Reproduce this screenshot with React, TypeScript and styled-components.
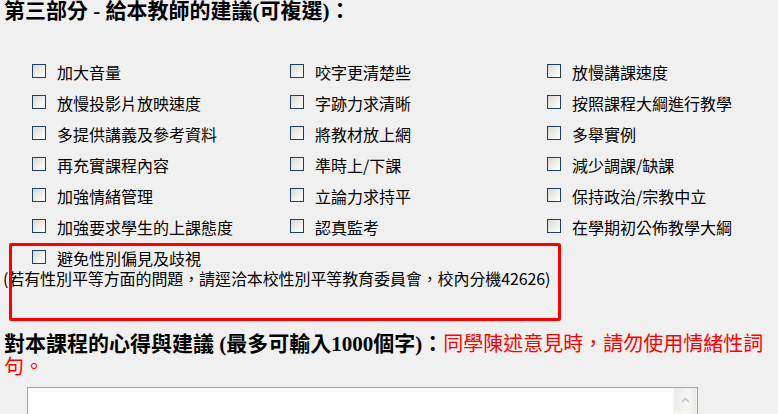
import React from "react";
import styled, { createGlobalStyle } from "styled-components";

const Global = createGlobalStyle`
  html, body { margin: 0; padding: 0; background: #f0f0f0; }
  body { font-family: "Liberation Serif", "Noto Sans CJK TC", serif; color: #000; }
`;

const Page = styled.div`
  position: relative;
  padding: 0 0 0 4px;
  width: 774px;
  overflow: hidden;
`;

const Title = styled.h2`
  margin: 0;
  font-size: 21px;
  font-weight: bold;
  line-height: 22px;
  height: 22px;
`;

const Grid = styled.div`
  display: grid;
  grid-template-columns: 258px 257px 1fr;
  grid-auto-rows: 31px;
  padding: 39px 0 0 28px;
`;

const Option = styled.label`
  display: flex;
  align-items: flex-start;
  gap: 11px;
  font-size: 16px;
  line-height: 18px;
  font-family: "Noto Sans CJK TC", sans-serif;
`;

const OptionText = styled.span`
  margin-top: 2px;
`;

const Box = styled.input.attrs({ type: "checkbox" })`
  appearance: none;
  margin: 3px 0 0 0;
  width: 14px;
  height: 14px;
  flex: none;
  box-sizing: border-box;
  border: 1px solid #1e3f66;
  background: linear-gradient(135deg, #d8d8d0 0%, #eeeee8 50%, #ffffff 100%);
`;

const Note = styled.div`
  font-size: 16px;
  line-height: 18px;
  margin: -9px 0 0 -1px;
  font-family: "Noto Sans CJK TC", sans-serif;
  letter-spacing: -0.1px;
`;

const Highlight = styled.div`
  position: absolute;
  left: 9px;
  top: 243px;
  width: 552px;
  height: 78px;
  box-sizing: border-box;
  border: 3px solid #ff0000;
  border-radius: 2px;
  pointer-events: none;
`;

const Heading = styled.div`
  margin-top: 46px;
  font-size: 21px;
  line-height: 23px;
  font-weight: bold;
`;

const Warn = styled.span`
  color: #ff0000;
  font-weight: normal;
  font-size: 20px;
`;

const AreaFrame = styled.div`
  display: flex;
  margin: 8px 0 0 23px;
  width: 671px;
  height: 120px;
  box-sizing: border-box;
  border: 1px solid #9e9ed0;
  background: #fff;
`;

const Area = styled.textarea`
  flex: 1;
  border: none;
  outline: none;
  resize: none;
  background: transparent;
  font-family: "Noto Sans CJK TC", sans-serif;
`;

const ScrollBar = styled.div`
  width: 23px;
  display: flex;
  flex-direction: column;
  background: linear-gradient(90deg, #f1f1e8 0%, #fafaf4 50%, #ededE2 100%);
  border-left: 1px solid #f4f4f0;
`;

const ScrollButton = styled.div`
  height: 21px;
  display: flex;
  align-items: center;
  justify-content: center;
  background: linear-gradient(90deg, #ebebeb, #f6f6f6 60%, #e9e9e4);
  border: 1px solid #f0f0ee;
`;

const items = [
  "加大音量", "咬字更清楚些", "放慢講課速度",
  "放慢投影片放映速度", "字跡力求清晰", "按照課程大綱進行教學",
  "多提供講義及參考資料", "將教材放上網", "多舉實例",
  "再充實課程內容", "準時上/下課", "減少調課/缺課",
  "加強情緒管理", "立論力求持平", "保持政治/宗教中立",
  "加強要求學生的上課態度", "認真監考", "在學期初公佈教學大綱",
  "避免性別偏見及歧視",
];

export default function App() {
  return (
    <Page>
      <Global />
      <Title>第三部分 - 給本教師的建議(可複選)：</Title>
      <Grid>
        {items.map((t) => (
          <Option key={t}>
            <Box />
            <OptionText>{t}</OptionText>
          </Option>
        ))}
      </Grid>
      <Note>(若有性別平等方面的問題，請逕洽本校性別平等教育委員會，校內分機42626)</Note>
      <Highlight />
      <Heading>
        對本課程的心得與建議 (最多可輸入1000個字)：<Warn>同學陳述意見時，請勿使用情緒性詞句。</Warn>
      </Heading>
      <AreaFrame>
        <Area />
        <ScrollBar>
          <ScrollButton>
            <svg width="9" height="6" viewBox="0 0 9 6">
              <path d="M1 5 L4.5 1.5 L8 5" fill="none" stroke="#c4c4c4" strokeWidth="1.5" />
            </svg>
          </ScrollButton>
        </ScrollBar>
      </AreaFrame>
    </Page>
  );
}
